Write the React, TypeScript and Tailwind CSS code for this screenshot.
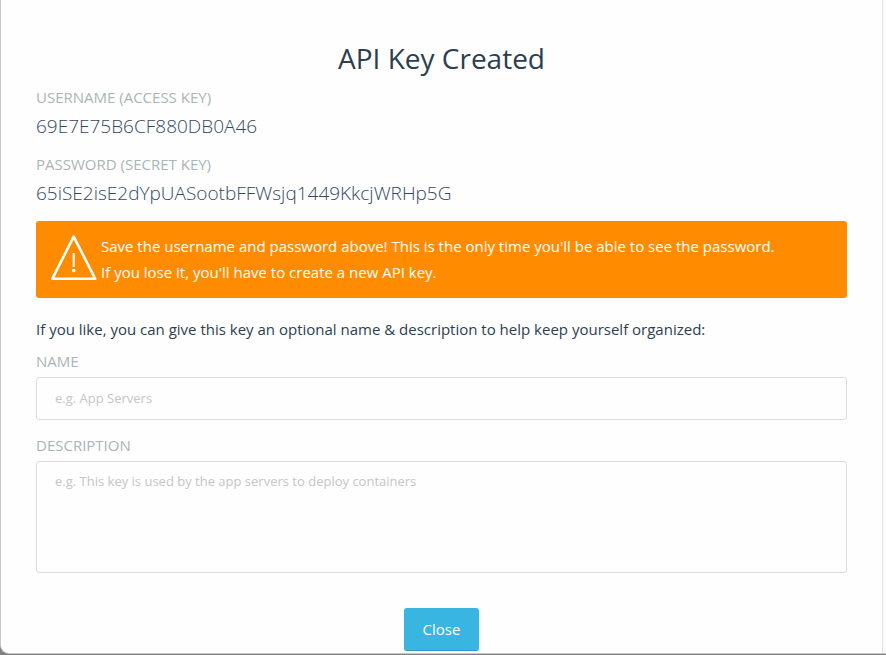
function Label({ children, htmlFor }: { children: string; htmlFor?: string }) {
  return (
    <label htmlFor={htmlFor} className="block h-[30px] text-[15px] leading-[30px] text-[#a9b6b7]">
      {children}
    </label>
  );
}

function KeyValue({ label, value }: { label: string; value: string }) {
  return (
    <div className="h-[67px]">
      <Label>{label}</Label>
      <div className="text-[19px] leading-[28px] font-light text-[#34495e]">{value}</div>
    </div>
  );
}

function WarningIcon() {
  return (
    <svg className="h-[48px] w-[48px] shrink-0" viewBox="0 0 48 48" fill="none" stroke="#fff" strokeWidth="2.6" strokeLinejoin="round">
      <path d="M23.7 2.6 2.3 44.8H45.2Z" />
      <path d="M23.7 19V33" strokeWidth="2.1" />
      <circle cx="23.7" cy="36.6" r="1.8" fill="#fff" stroke="none" />
    </svg>
  );
}

export default function App() {
  return (
    <div className="h-[655px] w-[886px] overflow-hidden bg-[#808080] font-['Open_Sans',sans-serif]">
      <div className="flex h-[654px] overflow-hidden rounded-bl-[9px] border-b border-l border-[#c8c8c8] bg-[#fefefe]">
        <main className="w-[881px] px-[35px] pt-[38px]">
          <h1 className="h-[44px] text-center text-[28px] leading-[40px] text-[#2c3e50]">API Key Created</h1>
          <KeyValue label="USERNAME (ACCESS KEY)" value="69E7E75B6CF880DB0A46" />
          <KeyValue label="PASSWORD (SECRET KEY)" value="65iSE2isE2dYpUASootbFFWsjq1449KkcjWRHp5G" />
          <div className="mt-[5px] flex h-[77px] items-start rounded-[3px] bg-[#ff8c00] pt-[13px] pl-[14px] text-[15px] leading-[26px] text-white">
            <WarningIcon />
            <p className="-mt-px ml-[3px]">
              Save the username and password above! This is the only time you'll be able to see the password.
              <br />
              If you lose it, you'll have to create a new API key.
            </p>
          </div>
          <p className="mt-[18px] h-[30px] text-[15px] leading-[26px] text-[#2c3e50]">
            If you like, you can give this key an optional name &amp; description to help keep yourself organized:
          </p>
          <Label htmlFor="name">NAME</Label>
          <input
            id="name"
            className="mt-px block h-[43px] w-full rounded-[3px] border border-[#dcdcdc] px-[18px] pb-[1px] text-[13px] outline-none placeholder:text-[#c5c5ca]"
            placeholder="e.g. App Servers"
          />
          <div className="mt-[10px]">
            <Label htmlFor="description">DESCRIPTION</Label>
          </div>
          <textarea
            id="description"
            className="mt-px block h-[112px] w-full resize-none rounded-[3px] border border-[#dcdcdc] px-[18px] py-[9px] text-[13px] leading-[20px] outline-none placeholder:text-[#c5c5ca]"
            placeholder="e.g. This key is used by the app servers to deploy containers"
          />
          <button className="mx-auto mt-[35px] block h-[43px] w-[75px] rounded-[3px] border-b border-[#299dc5] bg-[#39b5e2] text-[15px] text-white">
            Close
          </button>
        </main>
        <div className="w-[4px] border-l border-[#e5e5e5] bg-[#fafafa]" />
      </div>
    </div>
  );
}
